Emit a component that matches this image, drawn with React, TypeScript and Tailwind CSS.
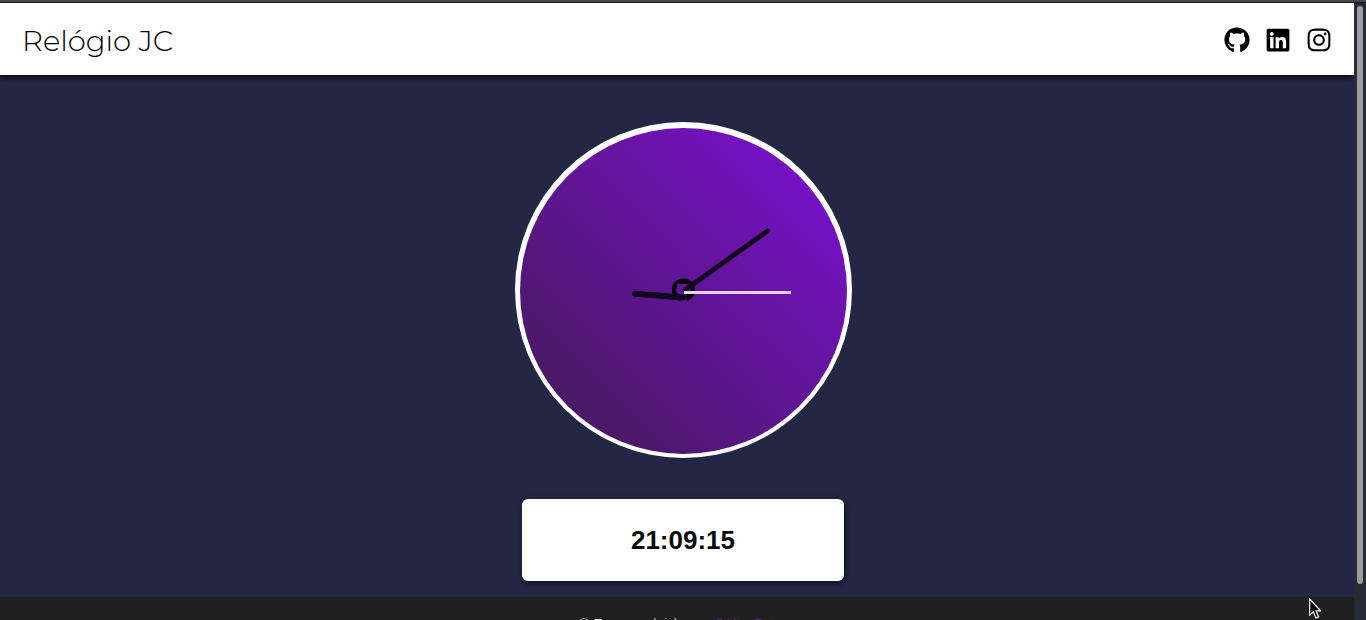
import { FaGithub, FaInstagram, FaLinkedin } from "react-icons/fa";

const links = [
  { label: "GitHub", href: "#github", Icon: FaGithub },
  { label: "LinkedIn", href: "#linkedin", Icon: FaLinkedin },
  { label: "Instagram", href: "#instagram", Icon: FaInstagram },
];

function Header() {
  return (
    <header className="relative z-10 flex h-[72px] shrink-0 items-center justify-between bg-white pl-[22px] pr-[22px] shadow-[0_2px_7px_rgba(0,0,0,0.9)]">
      <h1 className="pt-1 font-['Montserrat','Inter',sans-serif] text-[29px] font-light text-black">
        Relógio JC
      </h1>
      <nav aria-label="Redes sociais" className="flex gap-[15px] pt-0.5">
        {links.map(({ label, href, Icon }) => (
          <a key={label} href={href} aria-label={label} className="text-black">
            <Icon size={26} />
          </a>
        ))}
      </nav>
    </header>
  );
}

function Clock() {
  return (
    <svg viewBox="0 0 337 336" className="block h-[336px] w-[337px]" role="img" aria-label="Relógio analógico">
      <defs>
        <linearGradient id="face" x1="0.13" y1="0.87" x2="0.87" y2="0.13">
          <stop offset="0" stopColor="#491963" />
          <stop offset="1" stopColor="#7611c6" />
        </linearGradient>
      </defs>
      <ellipse cx="168.5" cy="168" rx="168.5" ry="168" fill="#fff" />
      <ellipse cx="168.5" cy="169" rx="163.5" ry="163" fill="url(#face)" />
      <FaGithub x={156.5} y={156} size={24} color="#000" />
      <path d="M120 171.700 L168 175.500" stroke="#140420" strokeWidth="6" strokeLinecap="round" />
      <path d="M170 168 L252.500 109" stroke="#140420" strokeWidth="5" strokeLinecap="round" />
      <rect x="169" y="169" width="107" height="3" fill="#e6cff3" />
    </svg>
  );
}

export default function App() {
  return (
    <div className="flex h-screen flex-col overflow-hidden bg-[#232743]">
      <div className="h-[3px] shrink-0 border-b border-[#141519] bg-[#46474e]" />
      <div className="flex min-h-0 flex-1">
        <div className="flex min-w-0 flex-1 flex-col overflow-hidden">
          <Header />
          <main className="flex shrink-0 flex-col items-center gap-[41px] pt-[47px] pb-4 pl-3">
            <Clock />
            <div className="flex h-[82px] w-[322px] items-center justify-center rounded-md bg-white shadow-[1px_2px_6px_rgba(0,0,0,0.6)]">
              <time className="font-['Liberation_Sans',Arial,sans-serif] text-[26px] font-bold text-[#0c0c0c]">
                21:09:15
              </time>
            </div>
          </main>
          <footer className="shrink-0 bg-[#202020] pt-3.5 pb-4 pl-3 text-center font-['Montserrat','Inter',sans-serif] text-sm leading-6 font-light text-white">
            © Desenvolvido por{" "}
            <a href="#autor" className="text-[#7a14d0]">
              Júlio Cairo
            </a>
          </footer>
        </div>
        <div className="w-3 shrink-0 bg-[#282a36] px-[3px] pt-[3px] pb-9">
          <div className="h-full rounded-full bg-[#9b9ca0]" />
        </div>
      </div>
      <svg viewBox="0 0 12 21" className="absolute left-[1309px] top-[598px] h-[21px] w-3" aria-hidden="true">
        <path
          d="M.7 1 V17.200 L4.300 13.800 L7 20 L9.600 18.900 L7 12.800 H11.600 Z"
          fill="#050505"
          stroke="#fff"
          strokeWidth="1.200"
        />
      </svg>
    </div>
  );
}
